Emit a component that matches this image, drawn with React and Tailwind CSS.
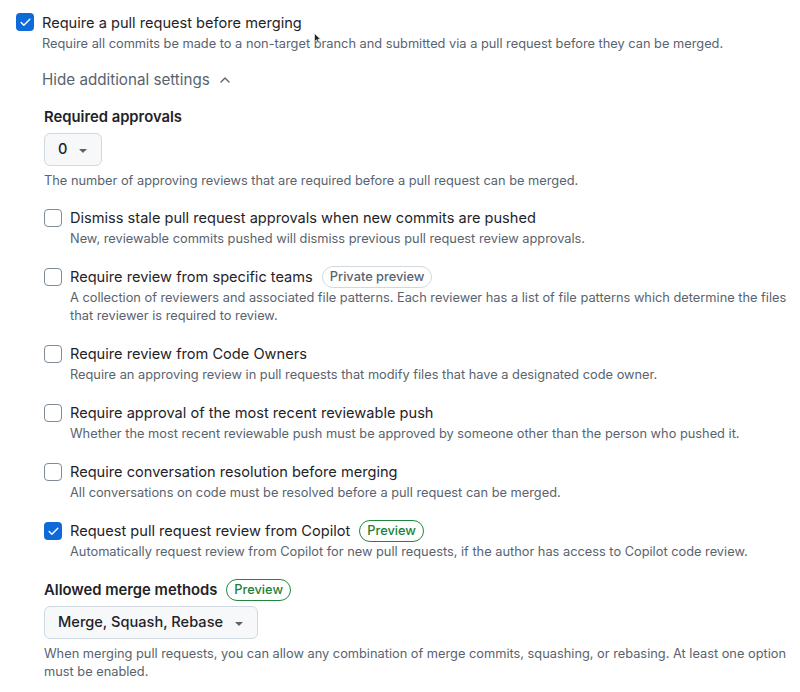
import { Check, ChevronUp } from 'lucide-react';

const Checkbox = ({ checked }) =>
  checked ? (
    <span className="flex h-[18px] w-[18px] shrink-0 items-center justify-center rounded-[4px] bg-[#0f6ad9]">
      <Check size={13} strokeWidth={2.6} className="text-white" />
    </span>
  ) : (
    <span className="block h-[18px] w-[18px] shrink-0 rounded-[4px] border border-[#818b98] bg-white" />
  );

const Badge = ({ children, green }) => (
  <span
    className={
      green
        ? 'rounded-full border border-[#1f883d] px-[7px] text-[12.8px] leading-[20px] font-medium text-[#1a7f37]'
        : 'rounded-full border border-[#d1d9e0] px-[7px] text-[12.8px] leading-[20px] font-medium text-[#59636e]'
    }
  >
    {children}
  </span>
);

const Caret = () => (
  <svg width="16" height="16" viewBox="0 0 16 16" className="text-[#59636e]">
    <path d="m4.427 7.427 3.396 3.396a.25.25 0 0 0 .354 0l3.396-3.396A.25.25 0 0 0 11.396 7H4.604a.25.25 0 0 0-.177.427Z" fill="currentColor" />
  </svg>
);

const Select = ({ children }) => (
  <button
    type="button"
    className="flex h-[33px] items-center gap-[8px] rounded-[6px] border border-[#d1d9e0] bg-[#f6f8fa] pl-[13px] pr-[10px] text-[14.6px] font-medium text-[#1f2328]"
  >
    {children}
    <Caret />
  </button>
);

const options = [
  {
    label: 'Dismiss stale pull request approvals when new commits are pushed',
    desc: 'New, reviewable commits pushed will dismiss previous pull request review approvals.',
  },
  {
    label: 'Require review from specific teams',
    badge: 'Private preview',
    desc: 'A collection of reviewers and associated file patterns. Each reviewer has a list of file patterns which determine the files that reviewer is required to review.',
  },
  {
    label: 'Require review from Code Owners',
    desc: 'Require an approving review in pull requests that modify files that have a designated code owner.',
  },
  {
    label: 'Require approval of the most recent reviewable push',
    desc: 'Whether the most recent reviewable push must be approved by someone other than the person who pushed it.',
  },
  {
    label: 'Require conversation resolution before merging',
    desc: 'All conversations on code must be resolved before a pull request can be merged.',
  },
  {
    label: 'Request pull request review from Copilot',
    badge: 'Preview',
    green: true,
    checked: true,
    desc: 'Automatically request review from Copilot for new pull requests, if the author has access to Copilot code review.',
  },
];

const Option = ({ label, desc, badge, green, checked }) => (
  <div className="flex gap-[8px]">
    <div className="pt-[2px]">
      <Checkbox checked={checked} />
    </div>
    <div>
      <div className="flex items-center gap-[9px] text-[14.6px] leading-[22px] text-[#1f2328]">
        {label}
        {badge && <Badge green={green}>{badge}</Badge>}
      </div>
      <p className="mt-px text-[12.8px] leading-[18px] text-[#59636e]">{desc}</p>
    </div>
  </div>
);

export default function App() {
  return (
    <div className="relative min-h-[692px] w-[800px] overflow-hidden bg-white pl-[16px] pr-[12px] pt-[12px] font-['Inter',sans-serif]">
      <div className="flex gap-[8px]">
        <div className="pt-[1px]">
          <Checkbox checked />
        </div>
        <div>
          <div className="text-[14.6px] leading-[22px] text-[#1f2328]">Require a pull request before merging</div>
          <p className="mt-px text-[12.8px] leading-[18px] text-[#59636e]">
            Require all commits be made to a non-target branch and submitted via a pull request before they can be merged.
          </p>
        </div>
      </div>

      <div className="pl-[26px]">
        <button type="button" className="mt-[16px] flex items-center gap-[7px] text-[15.2px] leading-[22px] text-[#59636e]">
          Hide additional settings
          <ChevronUp size={16} strokeWidth={2} />
        </button>

        <div className="mt-[15px] pl-[2px]">
          <h3 className="text-[14.8px] leading-[22px] font-semibold text-[#1f2328]">Required approvals</h3>
          <div className="mt-[5px]">
            <Select>0</Select>
          </div>
          <p className="mt-[6px] text-[12.8px] leading-[18px] text-[#59636e]">
            The number of approving reviews that are required before a pull request can be merged.
          </p>

          <div className="mt-[17px] flex flex-col gap-[18px]">
            {options.map((o) => (
              <Option key={o.label} {...o} />
            ))}
          </div>

          <div className="mt-[18px] flex items-center gap-[9px]">
            <h3 className="text-[14.8px] leading-[22px] font-semibold text-[#1f2328]">Allowed merge methods</h3>
            <Badge green>Preview</Badge>
          </div>
          <div className="mt-[5px]">
            <Select>Merge, Squash, Rebase</Select>
          </div>
          <p className="mt-[6px] text-[12.8px] leading-[18px] text-[#59636e]">
            When merging pull requests, you can allow any combination of merge commits, squashing, or rebasing. At least one option must be enabled.
          </p>
        </div>
      </div>

      <svg className="absolute left-[314px] top-[33px]" width="8" height="11" viewBox="0 0 8 11">
        <path d="M0.5 0.5 L0.5 8.5 L2.5 6.8 L4 10 L5.3 9.4 L3.9 6.3 L6.6 6.2 Z" fill="#222" stroke="#fff" strokeWidth="0.6" />
      </svg>
    </div>
  );
}
